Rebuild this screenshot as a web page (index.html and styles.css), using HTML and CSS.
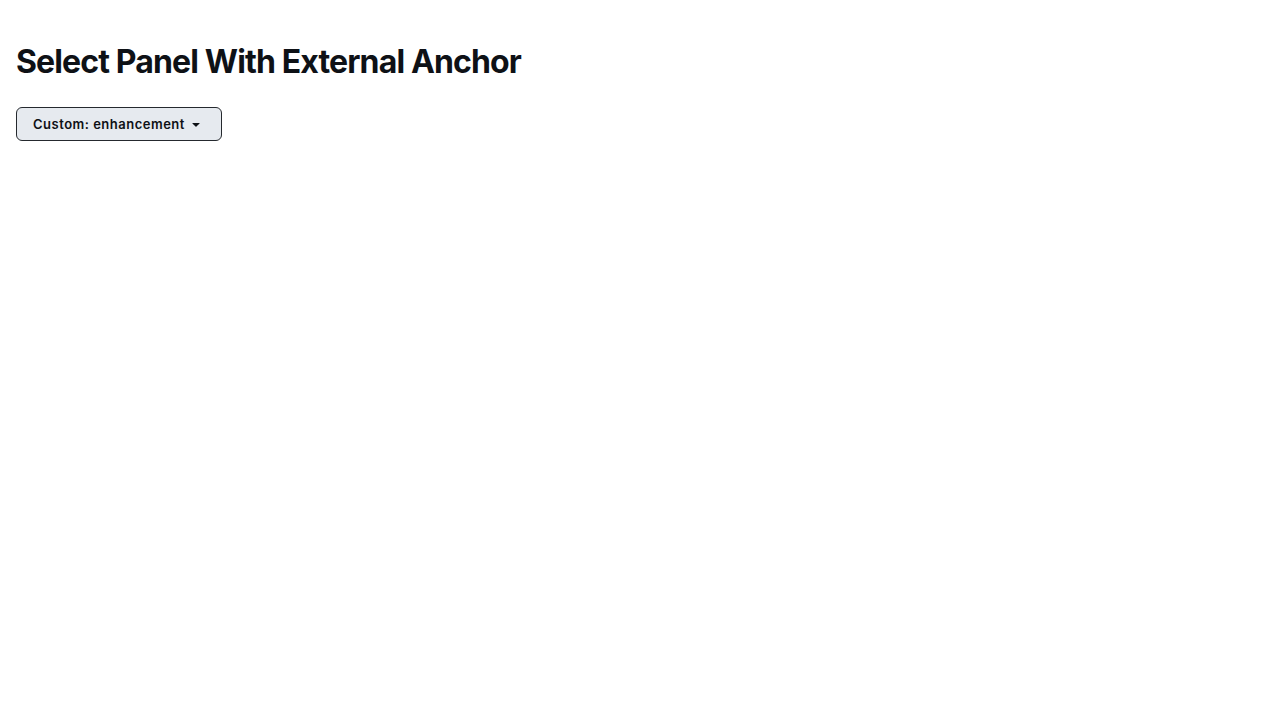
FILE: index.html
```html
<!DOCTYPE html>
<html>
<head>
<meta charset="utf-8">
<link rel="stylesheet" href="styles.css">
</head>
<body>
<main class="page">
  <h1 class="title">Select Panel With External Anchor</h1>
  <button class="select-btn" type="button">
    <span class="select-label">Custom: enhancement</span>
    <svg class="caret" width="16" height="16" viewBox="0 0 16 16" aria-hidden="true"><path d="m4.427 7.427 3.396 3.396a.25.25 0 0 0 .354 0l3.396-3.396A.25.25 0 0 0 11.396 7H4.604a.25.25 0 0 0-.177.427Z" fill="currentColor"/></svg>
  </button>
</main>
</body>
</html>
```

FILE: styles.css
```css
html, body {
  margin: 0;
  padding: 0;
  background: #ffffff;
}
body {
  font-family: Inter, "Noto Sans", sans-serif;
  color: #0e1116;
}
.page {
  padding: 24px 16px;
  display: flex;
  flex-direction: column;
  align-items: flex-start;
}
.title {
  margin: 18px 0 25px 0;
  font-size: 32px;
  line-height: 40px;
  font-weight: 700;
  color: #0e1116;
  letter-spacing: -0.86px;
}
.select-btn {
  display: inline-flex;
  align-items: center;
  gap: 3px;
  height: 34px;
  padding: 0 17px 0 16px;
  box-sizing: border-box;
  border: 1px solid #25292e;
  border-radius: 6px;
  background: #e6eaef;
  color: #0e1116;
  font-family: Inter, "Noto Sans", sans-serif;
  font-size: 13px;
  font-weight: 600;
  letter-spacing: 0.5px;
  cursor: pointer;
}
.caret {
  display: block;
}
```
